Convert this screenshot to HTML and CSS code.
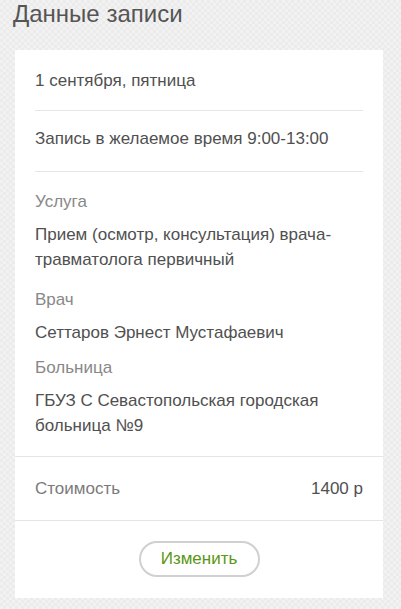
FILE: index.html
```html
<!DOCTYPE html>
<html lang="ru">
<head>
<meta charset="utf-8">
<link rel="stylesheet" href="styles.css">
</head>
<body>
<h1 class="title">Данные записи</h1>
<div class="card">
  <div class="section">
    <div class="row row-date">1 сентября, пятница</div>
    <div class="row row-time">Запись в желаемое время 9:00-13:00</div>
    <div class="details">
      <div class="label">Услуга</div>
      <div class="value">Прием (осмотр, консультация) врача-травматолога первичный</div>
      <div class="label">Врач</div>
      <div class="value value-short">Сеттаров Эрнест Мустафаевич</div>
      <div class="label">Больница</div>
      <div class="value">ГБУЗ С Севастопольская городская больница №9</div>
    </div>
  </div>
  <div class="price">
    <span class="price-label">Стоимость</span>
    <span class="price-value">1400 р</span>
  </div>
  <div class="actions">
    <button class="btn">Изменить</button>
  </div>
</div>
</body>
</html>
```
FILE: styles.css
```css
html, body {
  margin: 0;
  padding: 0;
}
body {
  width: 401px;
  height: 609px;
  overflow: hidden;
  font-family: "Liberation Sans", Arial, sans-serif;
  color: #505050;
  background-color: #f2f2f2;
  background-image:
    conic-gradient(#ebebeb 25%, transparent 0 50%, #ebebeb 0 75%, transparent 0);
  background-size: 6px 6px;
}
.title {
  margin: 0;
  padding: 0 0 0 13px;
  height: 50px;
  line-height: 28px;
  font-size: 24px;
  font-weight: normal;
  color: #555;
}
.card {
  margin: 0 18px 0 15px;
  background: #fff;
  height: 548px;
  box-sizing: border-box;
}
.section {
  padding: 0 20px;
}
.row {
  height: 60px;
  font-size: 17px;
  border-bottom: 1px solid #e5e5e5;
}
.row-date {
  line-height: 62px;
}
.row-time {
  line-height: 56px;
}
.details {
  padding: 17px 0 18px;
  font-size: 17px;
}
.label {
  color: #888;
  line-height: 25px;
  margin-bottom: 8px;
}
.value {
  line-height: 25px;
  margin-bottom: 15px;
}
.value-short {
  margin-bottom: 10px;
}
.value:last-child {
  margin-bottom: 0;
}
.price {
  border-top: 1px solid #e5e5e5;
  border-bottom: 1px solid #e5e5e5;
  height: 63px;
  display: flex;
  justify-content: space-between;
  align-items: center;
  padding: 0 20px;
  font-size: 17px;
}
.price-label {
  color: #7a7a7a;
}
.price-value {
  color: #505050;
}
.actions {
  display: flex;
  justify-content: center;
  padding-top: 20px;
}
.btn {
  width: 121px;
  height: 36px;
  border: 2px solid #d0d0d0;
  border-radius: 18px;
  background: #fff;
  color: #5a9614;
  font-family: "Liberation Sans", Arial, sans-serif;
  font-size: 17px;
  padding: 0;
}
```
